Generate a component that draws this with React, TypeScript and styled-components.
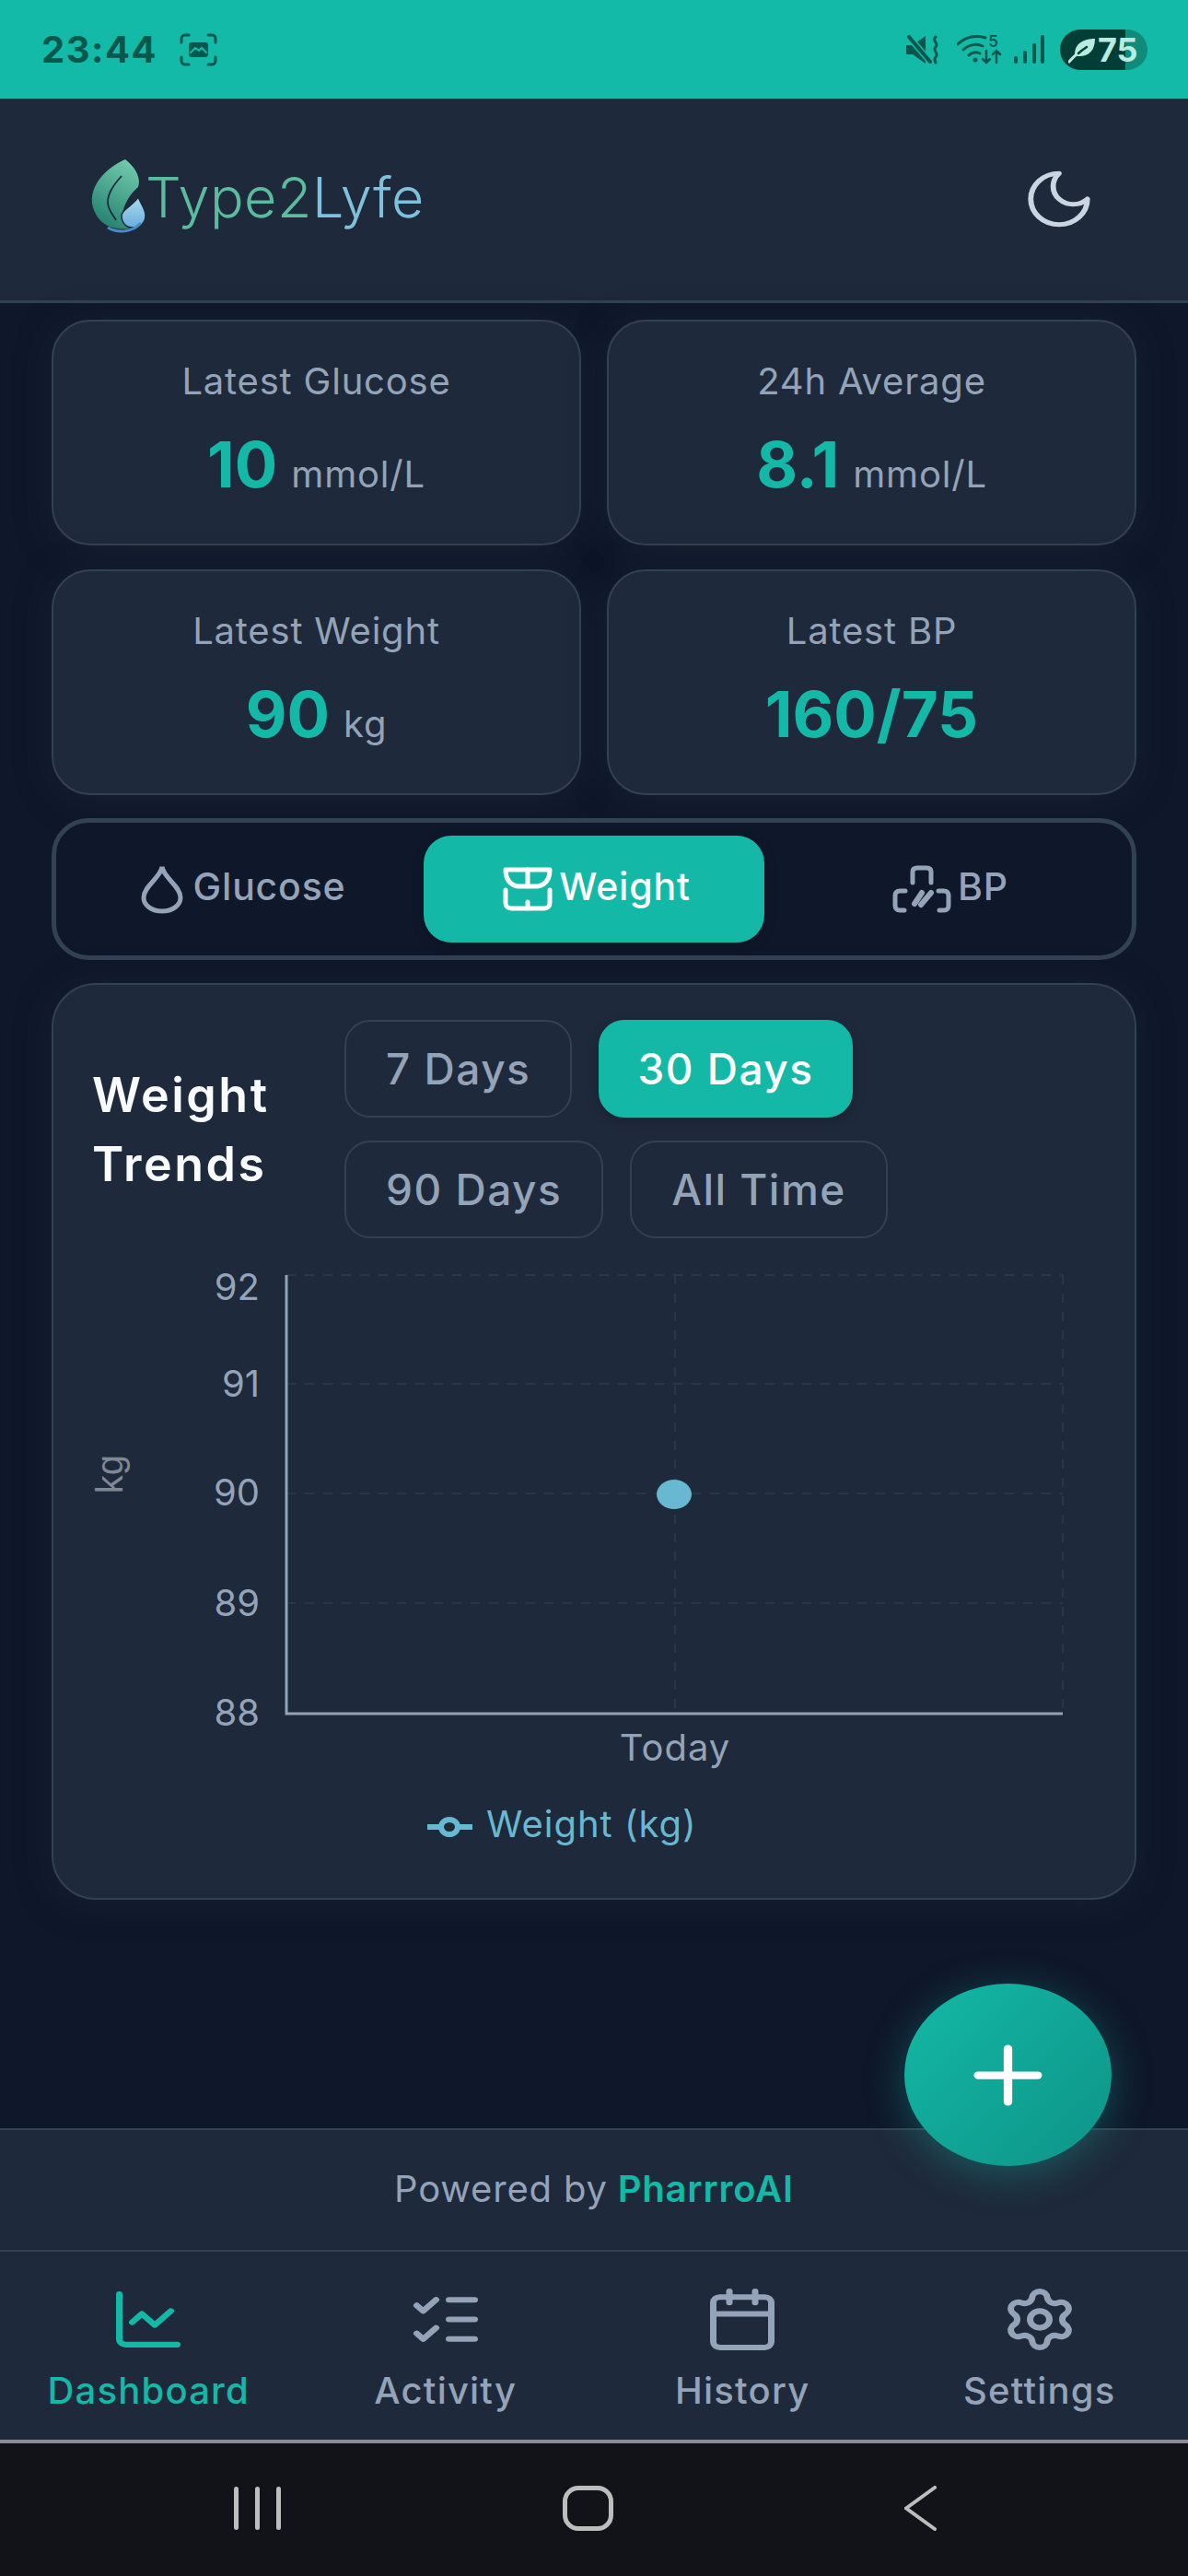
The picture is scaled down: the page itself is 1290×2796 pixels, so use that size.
import React from 'react'
import styled, { createGlobalStyle } from 'styled-components'
import { Calendar, ChartLine, ListChecks, Plus, Settings } from 'lucide-react'

const GlobalStyle = createGlobalStyle`
    html, body {
        margin: 0;
        padding: 0;
        background: #0f172a;
    }
    * {
        box-sizing: border-box;
    }
`

const Page = styled.div`
    position: relative;
    width: 1290px;
    height: 2796px;
    display: flex;
    flex-direction: column;
    overflow: hidden;
    background: #0f172a;
    font-family: Inter, "Liberation Sans", sans-serif;
`

const StatusBar = styled.div`
    height: 107px;
    flex: none;
    display: flex;
    align-items: center;
    justify-content: space-between;
    padding: 0 44px 0 45px;
    background: #13baa8;
    color: #07574d;
`

const StatusLeft = styled.div`
    display: flex;
    align-items: center;
    gap: 24px;
`

const Clock = styled.span`
    font-size: 40px;
    font-weight: 700;
    letter-spacing: 1.5px;
`

const StatusRight = styled.div`
    display: flex;
    align-items: center;
    gap: 12px;
`

const Wifi = styled.div`
    position: relative;
    width: 50px;
    height: 32px;
    margin-left: 6px;
`

const WifiFive = styled.span`
    position: absolute;
    top: -3px;
    right: 5px;
    font-size: 17px;
    font-weight: 600;
    line-height: 20px;
`

const Battery = styled.div`
    width: 95px;
    height: 44px;
    margin-left: 5px;
    border-radius: 22px;
    overflow: hidden;
    display: flex;
    align-items: center;
    padding-left: 9px;
    gap: 2px;
    color: #b9ebe0;
    background: linear-gradient(90deg, #033e36 0 75%, #108a7a 75% 100%);
`

const BatteryText = styled.span`
    font-size: 36px;
    font-weight: 700;
    line-height: 44px;
`

const Header = styled.header`
    height: 222px;
    flex: none;
    display: flex;
    align-items: center;
    justify-content: space-between;
    padding: 0 99px 8px 99px;
    background: #1e293b;
    border-bottom: 3px solid #334155;
`

const Brand = styled.div`
    display: flex;
    align-items: center;
`

const BrandName = styled.span`
    font-size: 61px;
    font-weight: 300;
    line-height: 70px;
    margin-top: 2px;
    letter-spacing: 0.5px;
    color: #5bbb9f;
`

const BrandTail = styled.span`
    color: #7fc0dc;
`

const MoonSvg = styled.svg`
    margin-top: 7px;
`

const Main = styled.main`
    flex: 1;
    padding: 18px 56px 0;
    display: flex;
    flex-direction: column;
    gap: 25px;
`

const StatGrid = styled.div`
    display: grid;
    grid-template-columns: 575px 575px;
    justify-content: space-between;
    row-gap: 26px;
`

const StatCard = styled.div`
    height: 245px;
    display: flex;
    flex-direction: column;
    align-items: center;
    padding-top: 42px;
    background: #1e293b;
    border: 2px solid #334155;
    border-radius: 42px;
    box-shadow: 0 4px 36px rgba(30, 41, 59, 0.55);
`

const StatLabel = styled.div`
    font-size: 40px;
    line-height: 46px;
    letter-spacing: 0.8px;
    color: #94a3b8;
`

const StatValue = styled.div`
    margin-top: 28px;
    display: flex;
    align-items: baseline;
    gap: 15px;
`

const StatNumber = styled.span`
    font-size: 69px;
    line-height: 78px;
    font-weight: 700;
    color: #14b8a6;
`

const StatUnit = styled.span`
    font-size: 40px;
    letter-spacing: 0.8px;
    color: #94a3b8;
`

const Toggle = styled.div`
    height: 154px;
    display: grid;
    grid-template-columns: repeat(3, 1fr);
    gap: 14px;
    padding: 14px 15px;
    background: #0f172a;
    border: 5px solid #334155;
    border-radius: 40px;
`

const ToggleTab = styled.div<{ $active?: boolean }>`
    display: flex;
    align-items: center;
    justify-content: center;
    gap: 7px;
    padding-left: 6px;
    border-radius: 30px;
    font-size: 41px;
    font-weight: 500;
    letter-spacing: 0.8px;
    color: ${props => (props.$active ? '#ffffff' : '#94a3b8')};
    background: ${props => (props.$active ? '#14b8a6' : 'transparent')};
    box-shadow: ${props => (props.$active ? '0 4px 14px rgba(0, 0, 0, 0.2)' : 'none')};
`

const ToggleLabel = styled.span`
    margin-top: -6px;
`

const ChartCard = styled.section`
    height: 995px;
    padding-top: 38px;
    background: #1e293b;
    border: 2px solid #334155;
    border-radius: 48px;
    box-shadow: 0 4px 36px rgba(30, 41, 59, 0.55);
`

const ChartHead = styled.div`
    display: flex;
    align-items: center;
    padding-left: 42px;
`

const ChartTitle = styled.h2`
    margin: 0;
    width: 274px;
    flex: none;
    font-size: 52px;
    line-height: 75px;
    font-weight: 600;
    letter-spacing: 2.5px;
    color: #f8fafc;
`

const Ranges = styled.div`
    display: flex;
    flex-wrap: wrap;
    width: 620px;
    gap: 25px 29px;
`

const RangeButton = styled.div<{ $active?: boolean }>`
    height: 106px;
    display: flex;
    align-items: center;
    padding: 0 ${props => (props.$active ? '40px' : '43px')};
    font-size: 46px;
    font-weight: 500;
    letter-spacing: 1.5px;
    border-radius: 28px;
    border: 2px solid ${props => (props.$active ? '#14b8a6' : '#334155')};
    color: ${props => (props.$active ? '#ffffff' : '#94a3b8')};
    background: ${props => (props.$active ? '#14b8a6' : 'transparent')};
    box-shadow: ${props => (props.$active ? '0 4px 14px rgba(0, 0, 0, 0.2)' : 'none')};
`

const ChartSvg = styled.svg`
    display: block;
    margin-top: 16px;
    font-family: Inter, "Liberation Sans", sans-serif;
`

const Fab = styled.div`
    position: absolute;
    right: 83px;
    bottom: 445px;
    width: 225px;
    height: 198px;
    display: flex;
    align-items: center;
    justify-content: center;
    border-radius: 50%;
    color: #ffffff;
    background: linear-gradient(135deg, #14b8a6, #0d9488);
    box-shadow: 0 8px 44px rgba(20, 184, 166, 0.35);
`

const Footer = styled.footer`
    height: 134px;
    flex: none;
    display: flex;
    align-items: center;
    justify-content: center;
    gap: 11px;
    padding-bottom: 3px;
    background: #1e293b;
    border-top: 2px solid #334155;
    border-bottom: 2px solid #334155;
    font-size: 40px;
    letter-spacing: 0.8px;
    color: #94a3b8;
`

const FooterBrand = styled.span`
    font-weight: 600;
    color: #14b8a6;
`

const Nav = styled.nav`
    height: 204px;
    flex: none;
    display: grid;
    grid-template-columns: repeat(4, 1fr);
    padding-top: 37px;
    background: #1e293b;
`

const NavItem = styled.div<{ $active?: boolean }>`
    display: flex;
    flex-direction: column;
    align-items: center;
    gap: 18px;
    font-size: 40px;
    font-weight: 500;
    letter-spacing: 1.2px;
    line-height: 46px;
    color: ${props => (props.$active ? '#14b8a6' : '#94a3b8')};
`

const SystemNav = styled.div`
    height: 148px;
    flex: none;
    display: flex;
    align-items: center;
    justify-content: space-between;
    padding: 0 273px 4px 254px;
    background: #111318;
    border-top: 4px solid #8a8d96;
`

const Recents = styled.div`
    width: 51px;
    height: 47px;
    display: flex;
    justify-content: space-between;
`

const RecentBar = styled.span`
    width: 5px;
    border-radius: 3px;
    background: #bdbdbd;
`

const HomeKey = styled.span`
    width: 55px;
    height: 49px;
    margin-right: 10px;
    border: 5px solid #bdbdbd;
    border-radius: 17px;
`

const ticks = [
    { value: 92, grid: 1384, base: 1411 },
    { value: 91, grid: 1502, base: 1516 },
    { value: 90, grid: 1621, base: 1634 },
    { value: 89, grid: 1740, base: 1754 },
    { value: 88, grid: 1860, base: 1873 },
]

const navIconProps = { width: 84, height: 73, strokeWidth: 2, preserveAspectRatio: 'none' }

const LeafLogo = () => (
    <svg width="59" height="80" viewBox="0 0 59 80" fill="none">
        <defs>
            <linearGradient id="leaf" x1="0.7" y1="0" x2="0.3" y2="1">
                <stop offset="0" stopColor="#6fc9ab" />
                <stop offset="1" stopColor="#23806f" />
            </linearGradient>
            <linearGradient id="drop" x1="0.5" y1="0" x2="0.5" y2="1">
                <stop offset="0" stopColor="#a9dcec" />
                <stop offset="1" stopColor="#6aaedc" />
            </linearGradient>
        </defs>
        <path d="M37 0C50 10 54 22 51 30C44 36 36 46 33 62C34 68 36 72 42 75C20 78 5 68 1 48C-1 28 15 10 37 0Z" fill="url(#leaf)" />
        <path d="M33 18C24 28 15 40 19 52C21 58 25 62 27 66" stroke="#1e293b" strokeWidth="1.8" />
        <path d="M51 41C55 50 59 54 59 61C59 69 53 74 45 74C38 74 33 69 33 61C33 54 46 50 51 41Z" fill="url(#drop)" stroke="#1e293b" strokeWidth="1.5" />
        <path d="M18 74C28 80 44 80 54 69" stroke="#4a8cc9" strokeWidth="3" />
    </svg>
)

const MoonIcon = () => (
    <MoonSvg width="82" height="74" viewBox="0 0 24 24" preserveAspectRatio="none" fill="none" stroke="#cbd5e1" strokeWidth="1.7" strokeLinejoin="round">
        <path d="M12 3a6 6 0 0 0 9 9 9 9 0 1 1-9-9Z" />
    </MoonSvg>
)

const ScreenshotIcon = () => (
    <svg width="41" height="36" viewBox="0 0 41 36" fill="none" stroke="currentColor" strokeWidth="3" strokeLinecap="round">
        <path d="M2 10V6a4 4 0 0 1 4-4h4M31 2h4a4 4 0 0 1 4 4v4M39 26v4a4 4 0 0 1-4 4h-4M10 34H6a4 4 0 0 1-4-4v-4" />
        <rect x="10" y="10" width="21" height="16" rx="3" fill="currentColor" stroke="none" />
        <path d="M12 21l5-5 4 3 3-3 5 5" stroke="#13baa8" strokeWidth="2" />
    </svg>
)

const MuteIcon = () => (
    <svg width="37" height="32" viewBox="0 0 37 32" fill="none" stroke="currentColor" strokeLinecap="round">
        <path d="M0 11h7l14-10v30L7 21H0z" fill="currentColor" stroke="none" />
        <path d="M2 1l25 29" stroke="#13baa8" strokeWidth="7" />
        <path d="M3 2l23 27" strokeWidth="4" />
        <path d="M32 2c-5 4 4 7 0 11c-4 4 4 7 0 11c-2 2-1 4 0 6" strokeWidth="3" />
    </svg>
)

const WifiIcon = () => (
    <svg width="50" height="32" viewBox="0 0 50 32" fill="none" stroke="currentColor" strokeLinecap="round">
        <path d="M1 10C10 1 22 0 31 3M7 16C13 10 22 9 28 12M13 22C17 18 21 18 25 20" strokeWidth="3" />
        <circle cx="20" cy="27" r="2.5" fill="currentColor" stroke="none" />
        <path d="M32 17v13M28 26l4 4 4-4M43 30V17M39 21l4-4 4 4" strokeWidth="2.5" />
    </svg>
)

const SignalIcon = () => (
    <svg width="33" height="31" viewBox="0 0 33 31" fill="currentColor">
        <rect x="0" y="23" width="4" height="8" rx="2" />
        <rect x="10" y="17" width="4" height="14" rx="2" />
        <rect x="20" y="9" width="4" height="22" rx="2" />
        <rect x="29" y="0" width="4" height="31" rx="2" />
    </svg>
)

const BatteryLeaf = () => (
    <svg width="30" height="30" viewBox="0 0 30 30" fill="none">
        <path d="M7 20C7 8 17 3 29 3C29 16 22 23 10 22Z" fill="currentColor" />
        <path d="M1 28C6 22 12 17 19 12" stroke="currentColor" strokeWidth="3" strokeLinecap="round" />
        <path d="M11 19C14 16 17 14 20 12" stroke="#033e36" strokeWidth="2.5" strokeLinecap="round" />
    </svg>
)

const DropIcon = () => (
    <svg width="50" height="54" viewBox="0 0 50 54" fill="none" stroke="currentColor" strokeWidth="5">
        <path d="M23 3C21 15 3 24 3 36C3 45 12 51 23 51C34 51 43 45 43 36C43 24 25 15 23 3Z" />
    </svg>
)

const ScaleIcon = () => (
    <svg width="54" height="48" viewBox="0 0 54 48" fill="none" stroke="currentColor" strokeWidth="5" strokeLinejoin="round" strokeLinecap="round">
        <path d="M3 3H51C51 12 47 19 38 21H16C7 19 3 12 3 3Z" />
        <path d="M27 3V21" />
        <path d="M3 25V39C3 43 6 45 9 45H45C48 45 51 43 51 39V25" />
        <path d="M27 38V45" />
    </svg>
)

const PressureIcon = () => (
    <svg width="64" height="52" viewBox="0 0 64 52" fill="none" stroke="currentColor" strokeWidth="5" strokeLinecap="round">
        <path d="M22 19V7C22 4 24 3 27 3H37C40 3 42 4 42 7V19" />
        <path d="M14 28H8C5 28 3 30 3 33V44C3 47 5 49 8 49H13" />
        <path d="M50 28H56C59 28 61 30 61 33V44C61 47 59 49 56 49H51" />
        <path d="M24 42L32 30M31 43L42 30" strokeWidth="6" />
    </svg>
)

const BackIcon = () => (
    <svg width="35" height="49" viewBox="0 0 35 49" fill="none" stroke="#bdbdbd" strokeWidth="4" strokeLinecap="round">
        <path d="M33 2L2 24.5L33 47" />
    </svg>
)

const stats = [
    { label: 'Latest Glucose', value: '10', unit: 'mmol/L' },
    { label: '24h Average', value: '8.1', unit: 'mmol/L' },
    { label: 'Latest Weight', value: '90', unit: 'kg' },
    { label: 'Latest BP', value: '160/75' },
]

const App: React.FC = () => {
    return (<Page>
        <GlobalStyle />
        <StatusBar>
            <StatusLeft>
                <Clock>23:44</Clock>
                <ScreenshotIcon />
            </StatusLeft>
            <StatusRight>
                <MuteIcon />
                <Wifi>
                    <WifiIcon />
                    <WifiFive>5</WifiFive>
                </Wifi>
                <SignalIcon />
                <Battery>
                    <BatteryLeaf />
                    <BatteryText>75</BatteryText>
                </Battery>
            </StatusRight>
        </StatusBar>
        <Header>
            <Brand>
                <LeafLogo />
                <BrandName>Type2<BrandTail>Lyfe</BrandTail></BrandName>
            </Brand>
            <MoonIcon />
        </Header>
        <Main>
            <StatGrid>
                {stats.map(stat => (
                    <StatCard key={stat.label}>
                        <StatLabel>{stat.label}</StatLabel>
                        <StatValue>
                            <StatNumber>{stat.value}</StatNumber>
                            {stat.unit && <StatUnit>{stat.unit}</StatUnit>}
                        </StatValue>
                    </StatCard>
                ))}
            </StatGrid>
            <Toggle>
                <ToggleTab><DropIcon /><ToggleLabel>Glucose</ToggleLabel></ToggleTab>
                <ToggleTab $active><ScaleIcon /><ToggleLabel>Weight</ToggleLabel></ToggleTab>
                <ToggleTab><PressureIcon /><ToggleLabel>BP</ToggleLabel></ToggleTab>
            </Toggle>
            <ChartCard>
                <ChartHead>
                    <ChartTitle>Weight Trends</ChartTitle>
                    <Ranges>
                        <RangeButton>7 Days</RangeButton>
                        <RangeButton $active>30 Days</RangeButton>
                        <RangeButton>90 Days</RangeButton>
                        <RangeButton>All Time</RangeButton>
                    </Ranges>
                </ChartHead>
                <ChartSvg width="1173" height="650" viewBox="58 1360 1173 650">
                    {ticks.map(tick => (
                        <g key={tick.value}>
                            <line x1="311" x2="1154" y1={tick.grid} y2={tick.grid} stroke="#2a3547" strokeWidth="2" strokeDasharray="10 10" />
                            <text x="282" y={tick.base} textAnchor="end" fontSize="40" fill="#94a3b8">{tick.value}</text>
                        </g>
                    ))}
                    <line x1="733" x2="733" y1="1384" y2="1860" stroke="#2a3547" strokeWidth="2" strokeDasharray="10 10" />
                    <line x1="1154" x2="1154" y1="1384" y2="1860" stroke="#2a3547" strokeWidth="2" strokeDasharray="10 10" />
                    <path d="M311 1384V1860H1154" fill="none" stroke="#94a3b8" strokeWidth="3" />
                    <ellipse cx="732" cy="1622" rx="19" ry="16" fill="#67b8d0" />
                    <text x="133" y="1600" textAnchor="middle" transform="rotate(-90 133 1600)" fontSize="40" fontFamily="Liberation Sans" fill="#7f8894">kg</text>
                    <text x="733" y="1911" textAnchor="middle" fontSize="40" letterSpacing="1" fill="#94a3b8">Today</text>
                    <line x1="464" x2="513" y1="1983" y2="1983" stroke="#67b8d0" strokeWidth="6" />
                    <ellipse cx="488" cy="1983" rx="9" ry="8" fill="#1e293b" stroke="#67b8d0" strokeWidth="6" />
                    <text x="528" y="1994" fontSize="40" letterSpacing="1" fill="#67b8d0">Weight (kg)</text>
                </ChartSvg>
            </ChartCard>
        </Main>
        <Fab>
            <Plus width={111} height={99} strokeWidth={2} preserveAspectRatio="none" />
        </Fab>
        <Footer>
            <span>Powered by</span>
            <FooterBrand>PharrroAI</FooterBrand>
        </Footer>
        <Nav>
            <NavItem $active><ChartLine {...navIconProps} />Dashboard</NavItem>
            <NavItem><ListChecks {...navIconProps} />Activity</NavItem>
            <NavItem><Calendar {...navIconProps} />History</NavItem>
            <NavItem><Settings {...navIconProps} />Settings</NavItem>
        </Nav>
        <SystemNav>
            <Recents>
                <RecentBar />
                <RecentBar />
                <RecentBar />
            </Recents>
            <HomeKey />
            <BackIcon />
        </SystemNav>
    </Page>
    )
}

export default App
